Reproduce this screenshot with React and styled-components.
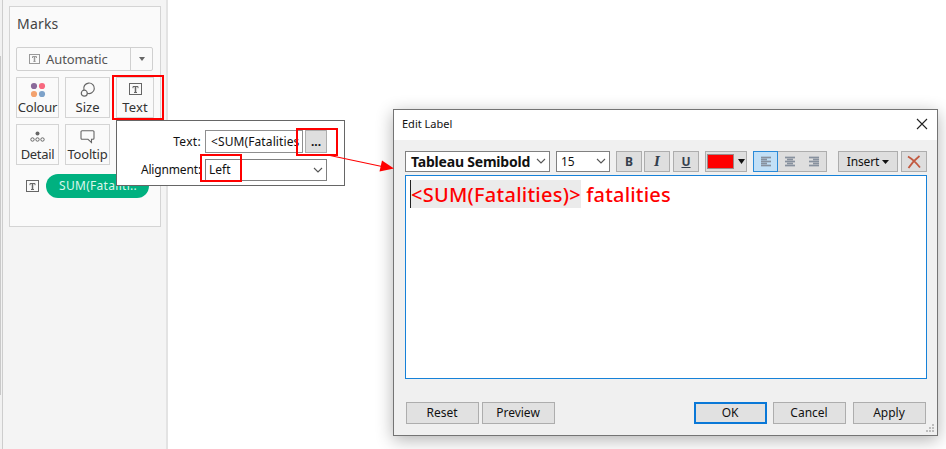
import React from 'react';
import styled, { createGlobalStyle, css } from 'styled-components';

const Global = createGlobalStyle`
  *, *::before, *::after { box-sizing: border-box; }
  body { margin: 0; background: #fff; overflow: hidden; }
`;

const Page = styled.div`
  position: relative;
  display: flex;
  width: 946px;
  height: 449px;
  overflow: hidden;
  background: #fff;
  color: #111;
  font-family: 'Noto Sans', 'Open Sans', sans-serif;
  font-size: 12px;
`;

const Text = styled.span`
  display: block;
  white-space: pre;
  font-size: ${(p) => p.$size || 12}px;
  font-weight: ${(p) => p.$weight || 400};
  letter-spacing: ${(p) => p.$track || 0}px;
  line-height: ${(p) => p.$line || 18}px;
  color: ${(p) => p.$color || 'inherit'};
`;

/* Marks side panel */
const Gutter = styled.div`
  width: 2px;
  display: flex;
  flex-direction: column;
  background: #f1f1f1;
`;
const Thumb = styled.div`
  width: 1px;
  height: 339px;
  margin-top: 56px;
  background: #c9c9c9;
`;
const Side = styled.aside`
  width: 166px;
  padding: 6px 0 0 6px;
  border-left: 1px solid #cdcdcd;
  border-right: 2px solid #e3e3e3;
  background: #f4f4f4;
`;
const Card = styled.section`
  width: 152px;
  height: 221px;
  padding: 7px 7px 0 6px;
  border: 1px solid #d4d4d4;
  background: #fafafa;
`;
const CardTitle = styled.header`
  height: 33px;
  padding-left: 1px;
  color: #444;
`;
const TypeSelect = styled.div`
  display: flex;
  height: 24px;
  border: 1px solid #d0d0d0;
  border-radius: 2px;
  color: #555;
`;
const TypeValue = styled.div`
  display: flex;
  flex: 1;
  align-items: center;
  gap: 5px;
  padding-left: 12px;
`;
const TypeArrow = styled.div`
  display: flex;
  align-items: center;
  justify-content: center;
  width: 22px;
  border-left: 1px solid #d0d0d0;
`;
const ShelfGrid = styled.div`
  display: grid;
  grid-template-columns: 43px 45px 38px;
  grid-auto-rows: 41px;
  gap: 6px;
  margin-top: 6px;
`;
const Shelf = styled.div`
  display: flex;
  flex-direction: column;
  align-items: center;
  justify-content: space-between;
  padding: 3px 0 1px;
  border: 1px solid #d4d4d4;
  color: #333;
`;
const ShelfIcon = styled.div`
  display: flex;
  align-items: center;
  height: 17px;
`;
const PillRow = styled.div`
  display: flex;
  align-items: center;
  gap: 7px;
  height: 24px;
  margin-top: 9px;
  padding-left: 10px;
`;
const Pill = styled.div`
  display: flex;
  align-items: center;
  width: 103px;
  height: 24px;
  padding-left: 13px;
  border-radius: 12px;
  background: #00b180;
`;

/* Text options popup */
const Popup = styled.div`
  position: absolute;
  left: 116px;
  top: 120px;
  display: grid;
  grid-template-columns: 84px 122px;
  grid-template-rows: 23px 22px;
  row-gap: 6px;
  column-gap: 4px;
  width: 229px;
  height: 66px;
  padding: 9px 0 0;
  border: 1px solid #666;
  background: #fff;
`;
const FieldLabel = styled.div`
  display: flex;
  align-items: center;
  justify-content: flex-end;
`;
const InputRow = styled.div`
  display: flex;
  justify-content: space-between;
`;
const Input = styled.div`
  display: flex;
  align-items: center;
  width: 98px;
  padding-left: 5px;
  border: 1px solid #8f8f8f;
  background: #fff;
`;
const MoreButton = styled.div`
  display: flex;
  align-items: center;
  justify-content: center;
  width: 22px;
  border: 1px solid #adadad;
  background: #dedede;
`;
const Combo = styled.div`
  display: flex;
  flex-shrink: 0;
  align-items: center;
  justify-content: space-between;
  width: ${(p) => p.$width}px;
  height: ${(p) => p.$height || 21}px;
  margin-right: ${(p) => p.$after || 0}px;
  padding: 0 ${(p) => p.$end || 4}px 0 ${(p) => p.$pad || 4}px;
  border: 1px solid #808080;
  background: #fff;
`;

/* Edit Label dialog */
const Dialog = styled.div`
  position: absolute;
  left: 393px;
  top: 109px;
  display: flex;
  flex-direction: column;
  width: 545px;
  height: 327px;
  border: 1px solid #747474;
  background: #f0f0f0;
  box-shadow: 0 4px 16px rgba(0, 0, 0, 0.3);
`;
const TitleBar = styled.header`
  display: flex;
  align-items: center;
  justify-content: space-between;
  height: 30px;
  padding: 0 9px 2px 8px;
  background: #fff;
`;
const Toolbar = styled.div`
  display: flex;
  height: 21px;
  margin: 11px 10px 0 11px;
`;
const buttonFace = css`
  display: flex;
  align-items: center;
  justify-content: center;
  border: 1px solid #adadad;
  background: #e1e1e1;
`;
const ToolButton = styled.div`
  ${buttonFace}
  flex-shrink: 0;
  gap: ${(p) => p.$gap || 0}px;
  width: ${(p) => p.$width}px;
  margin-right: ${(p) => p.$after || 0}px;
  background: #dedede;
`;
const Glyph = styled.span`
  font: 700 ${(p) => p.$size || 12}px/18px ${(p) => p.$family || "'Noto Sans', sans-serif"};
  font-style: ${(p) => (p.$italic ? 'italic' : 'normal')};
  color: #35404d;
  text-decoration: ${(p) => (p.$underline ? 'underline' : 'none')};
  text-underline-offset: 1px;
`;
const Swatch = styled.div`
  width: 27px;
  height: 15px;
  border: 1px solid #9b8a8a;
  background: #f00;
`;
const AlignGroup = styled.div`
  display: flex;
  flex-shrink: 0;
  width: 74px;
  margin-right: 11px;
  border: 1px solid #adadad;
  border-left: 0;
  background: #dedede;
`;
const AlignButton = styled.div`
  display: flex;
  align-items: center;
  justify-content: center;
  width: 24px;
  ${(p) =>
    p.$active &&
    css`
      width: 25px;
      margin: -1px 0;
      border: 1px solid #2a8ad8;
      background: #c2e0f7;
    `}
`;
const Editor = styled.div`
  display: flex;
  width: 522px;
  height: 204px;
  margin: 3px 0 0 11px;
  padding: 4px 0 0 4px;
  border: 1px solid #1681d8;
  background: #fff;
`;
const Field = styled.span`
  height: 28px;
  border-left: 1px solid #222;
  background: #ebebeb;
`;
const Footer = styled.footer`
  display: flex;
  align-items: center;
  height: 22px;
  margin: 23px 11px 0 12px;
`;
const Button = styled.div`
  ${buttonFace}
  width: ${(p) => p.$width || 73}px;
  height: 22px;
  padding-right: 1px;
  margin-right: ${(p) => p.$after || 0}px;
  ${(p) => p.$primary && 'border: 2px solid #0a78d7;'}
`;
const Spring = styled.div`
  flex: 1;
`;
const Grip = styled.svg`
  position: absolute;
  right: 2px;
  bottom: 2px;
`;

/* Red callouts drawn over the windows */
const Callout = styled.div`
  position: absolute;
  left: ${(p) => p.$x}px;
  top: ${(p) => p.$y}px;
  width: ${(p) => p.$w}px;
  height: ${(p) => p.$h}px;
  border: 2px solid #f00;
`;
const ArrowLine = styled.svg`
  position: absolute;
  left: 325px;
  top: 150px;
`;

const BoxedT = ({ color = '#666' }) => (
  <svg width="13" height="13" viewBox="0 0 13 13" fill="none" stroke={color}>
    <rect x="0.5" y="0.5" width="12" height="11" />
    <path d="M4 5.200V3.500h5v1.700M5 9.500h3" />
    <path d="M6.500 4v5.500" strokeWidth="1.5" />
  </svg>
);
const SmallT = () => (
  <svg width="12" height="11" viewBox="0 0 12 11" fill="none" stroke="#999">
    <rect x="0.5" y="0.5" width="10" height="9" />
    <path d="M3.500 4V2.500h4v1.500M4.500 7.500h2" />
    <path d="M5.500 3v4.500" strokeWidth="1.5" />
  </svg>
);
const ColourIcon = () => (
  <svg width="16" height="16" viewBox="0 0 16 16">
    <circle cx="4" cy="4" r="3.100" fill="#8a6a9a" />
    <circle cx="12" cy="4" r="3.100" fill="#f8697f" />
    <circle cx="4" cy="12" r="3.100" fill="#f3a26f" />
    <circle cx="12" cy="12" r="3.100" fill="#7da2c9" />
  </svg>
);
const SizeIcon = () => (
  <svg width="16" height="16" viewBox="0 0 16 16" fill="none" stroke="#666" strokeWidth="1.2">
    <path d="M4 8A5.300 5.300 0 1 1 7.200 11.300" />
    <circle cx="4.300" cy="11.200" r="3" />
  </svg>
);
const DetailIcon = () => (
  <svg width="15" height="12" viewBox="0 0 15 12" fill="none" stroke="#666">
    <circle cx="7.5" cy="2.4" r="2" fill="#666" stroke="none" />
    <circle cx="2.5" cy="8.5" r="1.7" />
    <circle cx="7.5" cy="8.5" r="1.7" />
    <circle cx="12.5" cy="8.5" r="1.7" />
  </svg>
);
const TooltipIcon = () => (
  <svg width="15" height="14" viewBox="0 0 15 14" fill="none" stroke="#666" strokeWidth="1.1">
    <path d="M2 .8h11a1 1 0 0 1 1 1v6.500a1 1 0 0 1-1 1H11.500v3.300L8 9.300H2a1 1 0 0 1-1-1v-6.500a1 1 0 0 1 1-1z" />
  </svg>
);
const Triangle = ({ w = 7, h = 4, color = '#111' }) => (
  <svg width={w} height={h} viewBox={`0 0 ${w} ${h}`}>
    <path d={`M0 0h${w}L${w / 2} ${h}z`} fill={color} />
  </svg>
);
const Chevron = () => (
  <svg width="10" height="7" viewBox="0 0 10 7" fill="none" stroke="#555" strokeWidth="1.1">
    <path d="M1 1l4 4 4-4" />
  </svg>
);
const AlignIcon = ({ rows }) => (
  <svg width="12" height="11" viewBox="0 0 12 11" stroke="#87919e" strokeWidth="1.7">
    {rows.map(([a, b], i) => (
      <path key={i} d={`M${a} ${1.5 + i * 2}H${b}`} />
    ))}
  </svg>
);

const shelves = [
  { name: 'Colour', icon: <ColourIcon />, track: -0.2 },
  { name: 'Size', icon: <SizeIcon />, track: 0 },
  { name: 'Text', icon: <BoxedT />, track: 0.1 },
  { name: 'Detail', icon: <DetailIcon />, track: -0.3 },
  { name: 'Tooltip', icon: <TooltipIcon />, track: -0.2 },
];

function MarksPanel() {
  return (
    <Side>
      <Card>
        <CardTitle><Text $size={14} $track={0.2} $line={20}>Marks</Text></CardTitle>
        <TypeSelect>
          <TypeValue><SmallT /><Text $size={13} $track={-0.1}>Automatic</Text></TypeValue>
          <TypeArrow><Triangle w={6} h={4} color="#666" /></TypeArrow>
        </TypeSelect>
        <ShelfGrid>
          {shelves.map((s) => (
            <Shelf key={s.name}>
              <ShelfIcon>{s.icon}</ShelfIcon>
              <Text $size={13} $track={s.track}>{s.name}</Text>
            </Shelf>
          ))}
        </ShelfGrid>
        <PillRow>
          <BoxedT />
          <Pill><Text $size={12} $track={0.3} $color="#d9f7ec">SUM(Fataliti..</Text></Pill>
        </PillRow>
      </Card>
    </Side>
  );
}

function TextPopup() {
  return (
    <Popup>
      <FieldLabel><Text $track={0.3}>Text:</Text></FieldLabel>
      <InputRow>
        <Input><Text $track={0.1}>{'<SUM(Fatalities'}</Text></Input>
        <MoreButton><Text $weight={700}>...</Text></MoreButton>
      </InputRow>
      <FieldLabel><Text $track={-0.15}>Alignment:</Text></FieldLabel>
      <Combo $width={122} $height={22} $pad={3} $end={3}><Text>Left</Text><Chevron /></Combo>
    </Popup>
  );
}

function EditLabel() {
  return (
    <Dialog>
      <TitleBar>
        <Text $size={11}>Edit Label</Text>
        <svg width="12" height="12" viewBox="0 0 12 12" stroke="#222" strokeWidth="1.1">
          <path d="M1 1l10 10M11 1L1 11" />
        </svg>
      </TitleBar>
      <Toolbar>
        <Combo $width={145} $after={6} $pad={5} $end={3}><Text $size={14} $weight={700} $track={-0.2}>Tableau Semibold</Text><Chevron /></Combo>
        <Combo $width={54} $after={6} $end={3}><Text>15</Text><Chevron /></Combo>
        <ToolButton $width={26} $after={2}><Glyph>B</Glyph></ToolButton>
        <ToolButton $width={26} $after={3}><Glyph $italic $size={12} $family="'DejaVu Serif', serif">I</Glyph></ToolButton>
        <ToolButton $width={26} $after={6}><Glyph $underline>U</Glyph></ToolButton>
        <ToolButton $width={42} $gap={4} $after={6}><Swatch /><Triangle w={7} h={5} /></ToolButton>
        <AlignGroup>
          <AlignButton $active><AlignIcon rows={[[1, 11], [1, 7], [1, 11], [1, 7], [1, 11]]} /></AlignButton>
          <AlignButton><AlignIcon rows={[[1, 11], [3, 9], [1, 11], [3, 9], [1, 11]]} /></AlignButton>
          <AlignButton><AlignIcon rows={[[1, 11], [5, 11], [1, 11], [5, 11], [1, 11]]} /></AlignButton>
        </AlignGroup>
        <ToolButton $width={60} $gap={3} $after={3}><Text $track={-0.15}>Insert</Text><Triangle w={7} h={4} /></ToolButton>
        <ToolButton $width={26}>
          <svg width="14" height="14" viewBox="0 0 14 14" stroke="#c25a41" strokeWidth="1.8">
            <path d="M1 1.500Q7 5 13 12.500M12.500 1Q6 6 1.500 13" fill="none" />
          </svg>
        </ToolButton>
      </Toolbar>
      <Editor>
        <Field><Text $size={20} $weight={500} $track={0.25} $line={30} $color="#f00">{'<SUM(Fatalities)>'}</Text></Field>
        <Text $size={20} $weight={500} $track={0.18} $line={30} $color="#f00">{' fatalities'}</Text>
      </Editor>
      <Footer>
        <Button $after={3}><Text>Reset</Text></Button>
        <Button><Text>Preview</Text></Button>
        <Spring />
        <Button $primary $after={6}><Text $track={-0.2}>OK</Text></Button>
        <Button $after={7}><Text>Cancel</Text></Button>
        <Button><Text>Apply</Text></Button>
      </Footer>
      <Grip width="9" height="9" viewBox="0 0 9 9" fill="#bdbdbd">
        <path d="M6 0h2v2H6zM3 3h2v2H3zM6 3h2v2H6zM0 6h2v2H0zM3 6h2v2H3zM6 6h2v2H6z" />
      </Grip>
    </Dialog>
  );
}

export default function App() {
  return (
    <>
      <Global />
      <Page>
        <Gutter><Thumb /></Gutter>
        <MarksPanel />
        <TextPopup />
        <EditLabel />
        <Callout $x={112} $y={75} $w={52} $h={45} />
        <Callout $x={296} $y={128} $w={42} $h={28} />
        <Callout $x={200} $y={154} $w={42} $h={28} />
        <ArrowLine width="72" height="26" viewBox="0 0 72 26">
          <path d="M5 5.500L57 16.500" stroke="#f00" strokeWidth="1.1" />
          <path d="M57 10.500L69 18.500L54.500 21.500z" fill="#f00" />
        </ArrowLine>
      </Page>
    </>
  );
}
